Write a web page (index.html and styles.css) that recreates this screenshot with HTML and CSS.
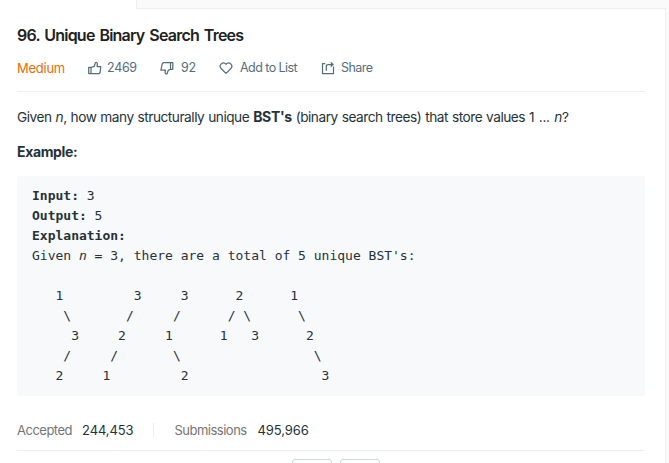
FILE: index.html
```html
<!DOCTYPE html>
<html lang="en">
<head>
<meta charset="utf-8">
<title>96. Unique Binary Search Trees</title>
<link rel="stylesheet" href="styles.css">
</head>
<body>
<div class="tabs"><div class="tab-active"></div><div class="tab-rest"></div></div>
<main class="panel">
  <h1 class="title">96. Unique Binary Search Trees</h1>
  <div class="meta">
    <span class="difficulty">Medium</span>
    <span class="action likes"><svg class="icon" viewBox="0 0 14 14"><path d="M.7 6.300H3v6.200H.7zM3 6.500 6.300 5.300 7.300 1.900c.2-.8 2.200-.4 2.100 1l-.3 2.600h3.700l-.7 6-1 1H3"/></svg><span class="count">2469</span></span>
    <span class="action dislikes"><svg class="icon" viewBox="0 0 14 14"><path d="M12.800 8.300h-2.300V1.700h2.300zM10.500 8.300 8.200 9.400 7.200 12.500c-.2.800-2.200.4-2.100-1l.3-2.300H.9l1.400-6.500 1-1h7.200"/></svg><span class="count">92</span></span>
    <span class="action add"><svg class="icon" viewBox="0 0 14 14"><path d="M7 12.400 2.100 7.500C-.8 4.400 3.800-.2 7 3.200 10.200-.2 14.800 4.400 11.900 7.500z"/></svg><span>Add to List</span></span>
    <span class="action share"><svg class="icon" viewBox="0 0 14 14"><path d="M4.300 2.500H1.500v10h11V5.500M5.300 9.800V5.300q0-1.800 1.800-1.800h4.500M9.700 1.500l2.400 2L9.700 5.500"/></svg><span>Share</span></span>
  </div>
  <div class="content">
    <p class="statement">Given <em>n</em>, how many structurally unique <strong>BST's</strong> (binary search trees) that store values <span class="range">1 ... <em>n</em>?</span></p>
    <p class="example"><strong>Example:</strong></p>
    <pre class="code"><strong>Input:</strong> 3
<strong>Output:</strong> 5
<strong>Explanation:</strong>
Given <em>n</em> = 3, there are a total of 5 unique BST's:

   1         3     3      2      1
    \       /     /      / \      \
     3     2     1      1   3      2
    /     /       \                 \
   2     1         2                 3</pre>
  </div>
  <div class="stats">
    <span class="label accepted">Accepted</span><span class="value">244,453</span>
    <span class="divider"></span>
    <span class="label submissions">Submissions</span><span class="value">495,966</span>
  </div>
  <div class="votes"><span class="vote"></span><span class="vote"></span></div>
</main>
</body>
</html>
```
FILE: styles.css
```css
* { box-sizing: border-box; }
body {
  margin: 0;
  height: 463px;
  overflow: hidden;
  background: #fafafa;
  color: #263238;
  font-family: Inter, "Liberation Sans", sans-serif;
  font-size: 14px;
}
.tabs { display: flex; width: 666px; height: 9px; }
.tab-active { width: 136px; background: #fff; }
.tab-rest { flex: 1; border-left: 1px solid #eee; border-bottom: 1px solid #eee; }
.panel {
  width: 666px;
  height: 454px;
  padding: 16px 20px 0 17px;
  border-right: 1px solid #eee;
  background: #fff;
  overflow: hidden;
}
.title { margin: 0; color: #212121; font-size: 16px; font-weight: 600; line-height: 20px; letter-spacing: -0.78px; word-spacing: 1.6px; white-space: nowrap; }
.meta {
  display: flex;
  align-items: center;
  height: 47px;
  border-bottom: 1px solid #eee;
  color: #546e7a;
  font-size: 12.5px;
  line-height: 20px;
  letter-spacing: -0.55px;
  white-space: nowrap;
}
.difficulty { width: 71px; color: #ef6c00; font-size: 13px; letter-spacing: -0.25px; }
.count { letter-spacing: -0.3px; }
.action { display: flex; align-items: center; gap: 5px; }
.likes { width: 72px; }
.dislikes { width: 59px; gap: 7px; }
.add { width: 102px; gap: 7px; }
.share { gap: 6px; }
.icon { width: 14px; height: 14px; fill: none; stroke: #546e7a; stroke-width: 1.25; stroke-linejoin: round; }
.statement, .example { margin: 0; line-height: 20px; white-space: nowrap; }
.statement { margin-top: 15px; font-size: 13.7px; letter-spacing: -0.49px; word-spacing: 0.6px; }
.statement strong { font-size: 14px; letter-spacing: -0.35px; }
.range { letter-spacing: -0.3px; word-spacing: 0.9px; }
.example { margin-top: 15px; letter-spacing: -0.35px; }
.code {
  height: 220px;
  margin: 14px 0 0;
  padding: 10px 15px;
  border-radius: 3px;
  background: #f7f9fa;
  font-family: "DejaVu Sans Mono", monospace;
  font-size: 13px;
  line-height: 20px;
}
.stats {
  display: flex;
  align-items: center;
  height: 55px;
  padding-top: 14px;
  border-bottom: 1px solid #eee;
  font-size: 13px;
  white-space: nowrap;
}
.label { color: #757575; letter-spacing: -0.5px; }
.value { letter-spacing: -0.1px; }
.accepted { width: 65px; }
.submissions { width: 83px; }
.divider { width: 1px; height: 14px; margin: 0 20px; background: #eee; }
.votes { display: flex; gap: 8px; padding: 8px 0 0 275px; }
.vote { width: 40px; height: 24px; border: 1px solid #cfd8dc; border-radius: 3px; }
```
